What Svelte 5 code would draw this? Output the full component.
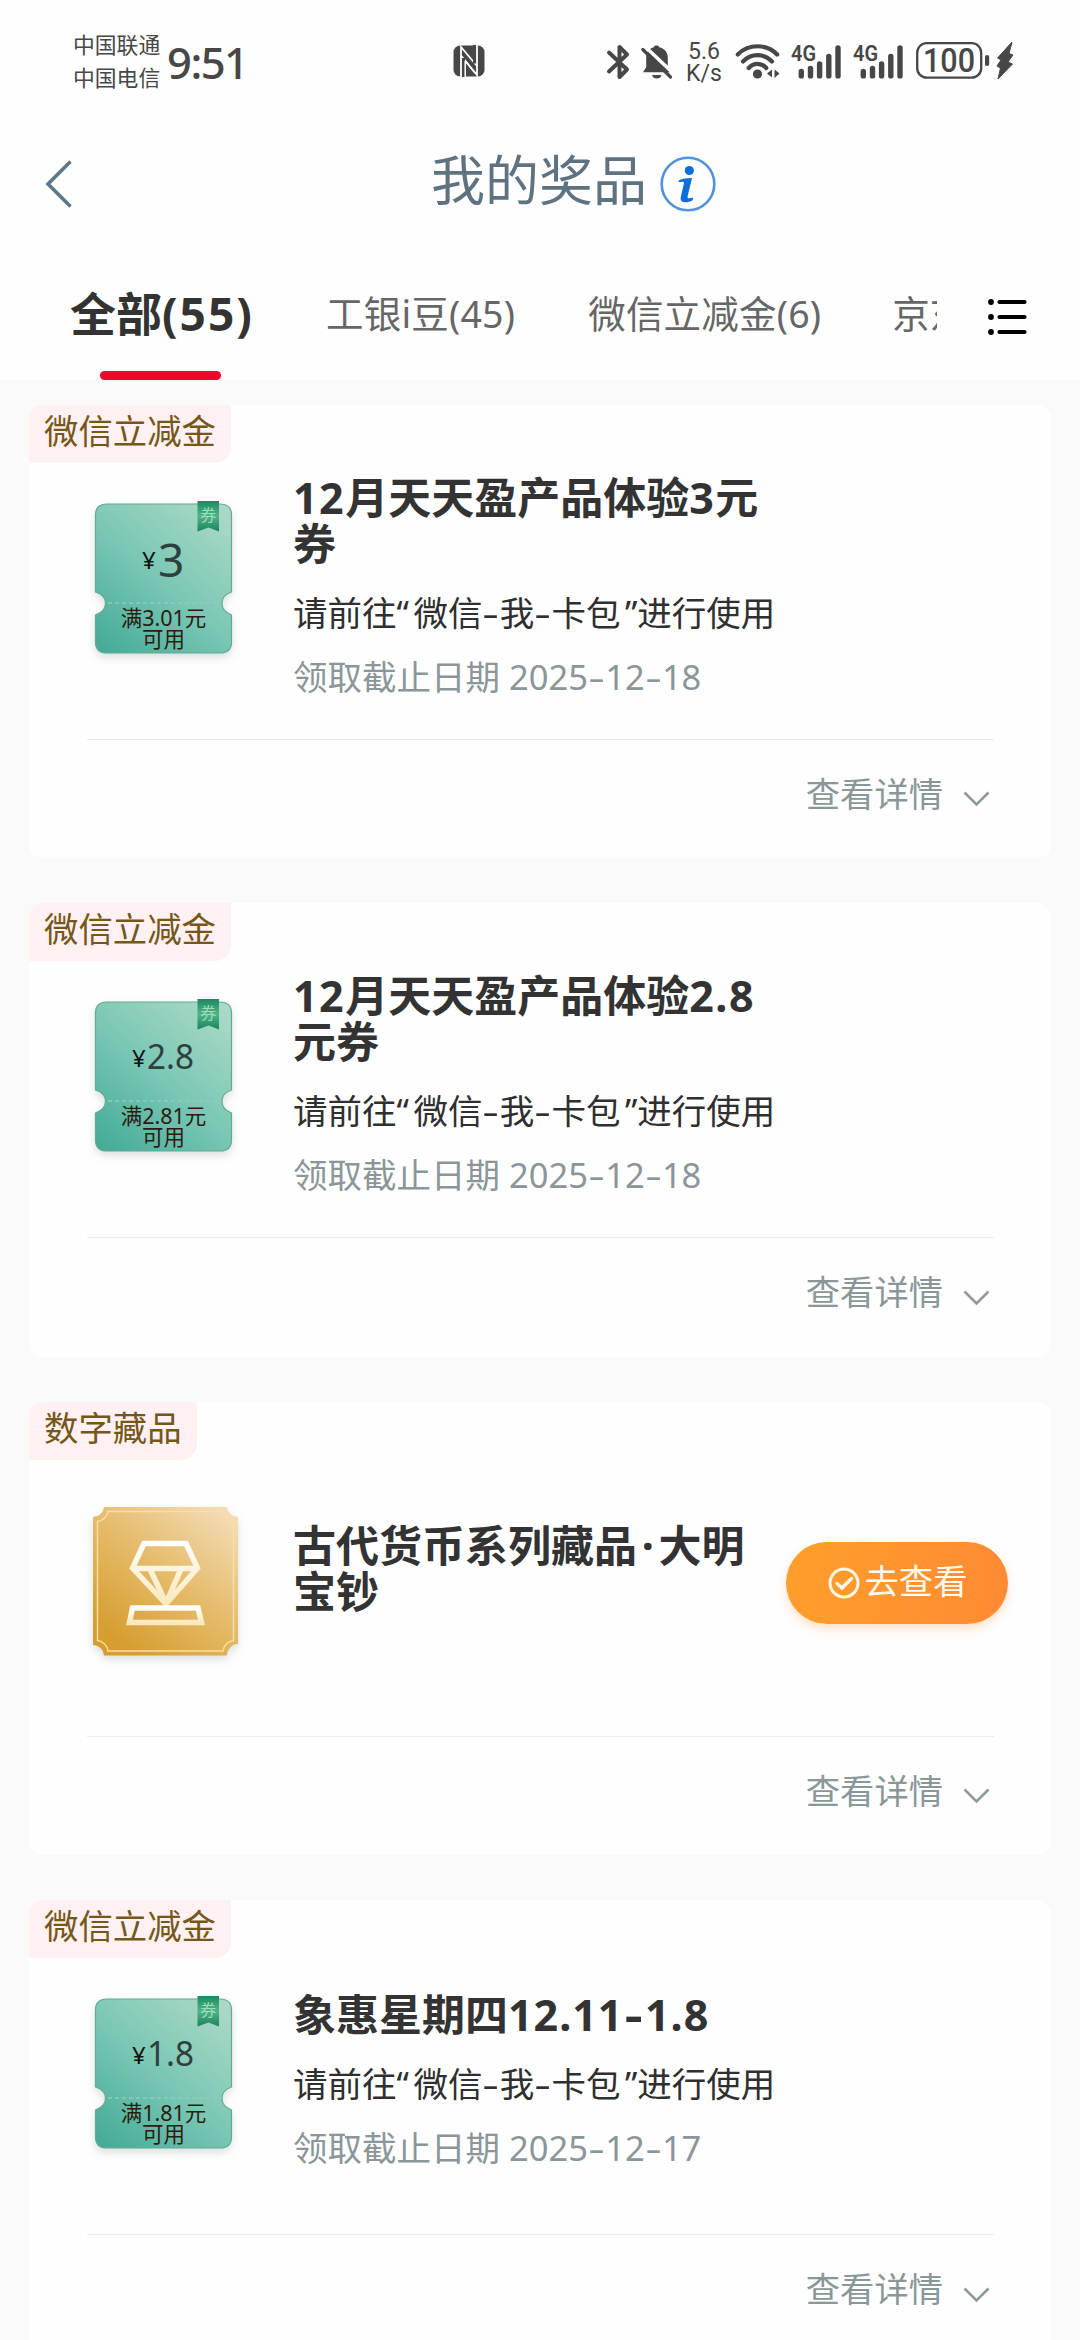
<script>
  const tabs = ['工银i豆(45)', '微信立减金(6)', '京东卡券(2)'];
  const hint = '请前往“微信-我-卡包”进行使用';
  const prizes = [
    { tag: '微信立减金', kind: 'two', title: '12月天天盈产品体验3元券', amount: '3', min: '3.01', date: '2025-12-18' },
    { tag: '微信立减金', kind: 'two', title: '12月天天盈产品体验2.8元券', amount: '2.8', min: '2.81', date: '2025-12-18' },
    { tag: '数字藏品', kind: 'coin', title: '古代货币系列藏品·大明宝钞' },
    { tag: '微信立减金', kind: 'one', title: '象惠星期四12.11-1.8', amount: '1.8', min: '1.81', date: '2025-12-17' }
  ];
  const runs = (text) => text.split(/([-“”·]|[0-9.]+)/).filter(Boolean);
  const runClass = (r) =>
    r === '-' ? 'dash' : r === '“' ? 'open' : r === '”' ? 'close' : r === '·' ? 'dot' : /^[0-9.]/.test(r) ? 'num' : '';
</script>

{#snippet rich(text)}{#each runs(text) as r}{#if runClass(r)}<span class={runClass(r)}>{r}</span>{:else}{r}{/if}{/each}{/snippet}

{#snippet signal()}
  <svg class="signal" width="52" height="40" viewBox="0 0 52 40">
    <text x="0" y="20.500" font-size="22" font-weight="600" textLength="25" lengthAdjust="spacingAndGlyphs" fill="#474747">4G</text>
    <g stroke="#474747" stroke-width="5.400" stroke-linecap="round">
      <path d="M10.3 31.500v4.400M19.500 28.500v7.400M28.600 24v11.900M37.800 16.500v19.400M47 8v27.900" />
    </g>
  </svg>
{/snippet}

<div class="page">
  <header>
    <div class="status">
      <div class="carriers"><span>中国联通</span><span>中国电信</span></div>
      <div class="time">9:51</div>
      <svg class="nfc" width="32" height="32" viewBox="0 0 32 32">
        <rect x="0.500" y="0.500" width="31" height="31" rx="6.500" fill="#474747" />
        <path d="M8 32V2L24 21" fill="none" stroke="#fff" stroke-width="1.800" />
        <path d="M24 0V30L8 10.500" fill="none" stroke="#fff" stroke-width="1.800" />
        <path d="M10.500 13V32M21.500 0V18.500" stroke="#474747" stroke-width="3" />
        <path d="M12.200 32V16M12.200 16L22 28" fill="none" stroke="#fff" stroke-width="1.500" />
      </svg>
      <div class="right">
        <svg class="bt" width="24" height="36" viewBox="0 0 24 36">
          <path d="M2 8.500L20 25.500L12.500 33V3L20 10.500L2 27.500" fill="none" stroke="#474747" stroke-width="4" stroke-linejoin="round" stroke-linecap="round" />
        </svg>
        <svg class="bell" width="32" height="36" viewBox="0 0 32 36">
          <path d="M15.500 1.500c1.600 0 2.500.7 2.700 1.700 5.600 1.200 8.600 5.200 8.600 10.600v9.800l3 4.600H2l3.200-4.900v-9.500c0-5.400 2.800-9.400 7.600-10.600.2-1 1.100-1.700 2.700-1.700z" fill="#474747" />
          <path d="M11 31h9.500c-.6 2.400-2.300 3.600-4.700 3.600S11.600 33.400 11 31z" fill="#474747" />
          <path d="M3 1.500L33 30" stroke="#fff" stroke-width="3.500" />
          <path d="M1.800 5.500L29.500 33" stroke="#474747" stroke-width="3.200" stroke-linecap="round" />
        </svg>
        <div class="rate"><span>5.6</span><span>K/s</span></div>
        <svg class="wifi" width="46" height="38" viewBox="0 0 46 38">
          <g fill="none" stroke="#474747" stroke-width="4.200" stroke-linecap="round">
            <path d="M2.800 12.500C13 1.500 32 1.500 42.200 12.500M8 19.500C16 11 29 11 37 19.500M13.700 26C18.500 20.500 26.500 20.500 31.300 26" />
          </g>
          <circle cx="22.500" cy="32" r="4.600" fill="#474747" />
          <path d="M37 27.500v8l-5-4zM39.500 27.500v8.500l5-4.500z" fill="#474747" />
        </svg>
        {@render signal()}
        {@render signal()}
        <svg class="battery" width="98" height="40" viewBox="0 0 98 40">
          <rect x="1.200" y="3.200" width="64" height="34.500" rx="9.500" fill="none" stroke="#474747" stroke-width="2.300" />
          <text x="33" y="32" text-anchor="middle" font-size="32.500" font-weight="500" textLength="52" lengthAdjust="spacingAndGlyphs" fill="#474747">100</text>
          <rect x="69" y="15" width="4.200" height="11" rx="2" fill="#474747" />
          <path d="M96 2L81.500 18L85 20L81 26L84.500 28L82 39L96.500 24L92 22L97 15L93 13.500Z" fill="#474747" stroke="#474747" stroke-width="1" stroke-linejoin="round" />
        </svg>
      </div>
    </div>

    <div class="titlebar">
      <svg class="back" width="30" height="50" viewBox="0 0 30 50">
        <path d="M25.500 2.500L3 25L25.500 47.500" fill="none" stroke="#5c7889" stroke-width="3.600" />
      </svg>
      <h1>我的奖品</h1>
      <svg class="info" width="56" height="56" viewBox="0 0 56 56">
        <circle cx="28" cy="28" r="26.300" fill="none" stroke="#4f93da" stroke-width="2.600" />
        <circle cx="29.300" cy="14.500" r="4.600" fill="#0b6fdb" />
        <path d="M18.800 24.500C22 22.300 27.500 22.200 32 22L27.600 40.500C27.200 42.700 29.500 42.700 33.200 41.600L32.600 44.200C29.500 46.500 19.500 48.300 20.700 41.500L24 27C24.200 25.300 21.500 25.600 18.500 26.200Z" fill="#0b6fdb" />
      </svg>
    </div>

    <nav>
      <div class="tabs">
        <div class="tab active">全部<span>(55)</span></div>
        {#each tabs as t}<div class="tab">{t}</div>{/each}
      </div>
      <svg class="list" width="40" height="38" viewBox="0 0 40 38">
        <g fill="#000"><circle cx="3" cy="4" r="2.900" /><circle cx="3" cy="19" r="2.900" /><circle cx="3" cy="34" r="2.900" /></g>
        <path d="M11.500 4H36.500M11.500 19H36.500M11.500 34H36.500" stroke="#000" stroke-width="4.200" stroke-linecap="round" />
      </svg>
    </nav>
  </header>

  <main>
    {#each prizes as p}
      <section class="card">
        <div class="tag">{p.tag}</div>
        <div class="body {p.kind}">
          {#if p.kind === 'coin'}
            <svg class="art" width="170" height="170" viewBox="0 0 170 170">
              <defs>
                <linearGradient id="gold" x1="0.150" y1="0.900" x2="0.850" y2="0">
                  <stop offset="0" stop-color="#d69d2f" /><stop offset="0.500" stop-color="#e5bb6a" /><stop offset="1" stop-color="#f3dbb5" />
                </linearGradient>
                <linearGradient id="shine" x1="0" y1="0" x2="0" y2="1">
                  <stop offset="0" stop-color="#fffefa" /><stop offset="1" stop-color="#fbe7bd" />
                </linearGradient>
              </defs>
              <path class="drop" d="M19 12H142A11 11 0 0 0 153 22V149A11 11 0 0 0 142 160.500H19A11 11 0 0 0 8 150V22A11 11 0 0 0 19 12Z" fill="url(#gold)" />
              <path d="M23 16.500H138A12 12 0 0 0 148.500 26.500V145.500A12 12 0 0 0 138 156H23A12 12 0 0 0 12.500 145.500V26.500A12 12 0 0 0 23 16.500Z" fill="none" stroke="#fbdda0" stroke-width="1.500" />
              <g fill="none" stroke="url(#shine)" stroke-width="5.500" stroke-linejoin="miter">
                <path d="M59 48.500H101L112.500 73L81 109L47.500 73ZM47.500 73.500H112.500M65 74L81 108L96 74" />
                <path d="M47.500 113H113L116.500 127.500H44.500Z" />
              </g>
            </svg>
          {:else}
            <svg class="art" width="170" height="170" viewBox="0 0 170 170">
              <defs>
                <linearGradient id="green" x1="0.050" y1="1" x2="0.850" y2="0">
                  <stop offset="0" stop-color="#43ab97" /><stop offset="0.500" stop-color="#79c7b4" /><stop offset="1" stop-color="#a9d8c6" />
                </linearGradient>
                <linearGradient id="ribbon" x1="0" y1="0" x2="0" y2="1">
                  <stop offset="0" stop-color="#1c8a5e" /><stop offset="0.500" stop-color="#51b48a" /><stop offset="1" stop-color="#19845a" />
                </linearGradient>
              </defs>
              <path class="drop" d="M22 9H135Q146.500 9 146.500 20V97C140 99 137 103.500 137 108.500S140 117.500 146.500 120V147Q146.500 158 135 158H22Q10.500 158 10.500 147V120C17 117.500 20.500 113.500 20.500 108.500S17 99 10.500 97V20Q10.500 9 22 9Z" fill="url(#green)" stroke="#64a994" stroke-width="1.200" />
              <path d="M23 108H136" stroke="#8fcdbb" stroke-width="1.400" stroke-dasharray="4 3" />
              <path d="M112.500 6H134V36.500L123.500 32.500L112.500 36.500Z" fill="url(#ribbon)" />
              <text x="123.300" y="25.500" text-anchor="middle" font-size="16" fill="#9dddbd">券</text>
              {#if p.amount.length === 1}
                <text x="57" y="74" font-size="24" fill="#111">¥</text>
                <text x="73" y="82" font-size="46" fill="#2e3f3d">{p.amount}</text>
              {:else}
                <text x="47" y="74" font-size="24" fill="#111">¥</text>
                <text x="62" y="76" font-size="34.500" textLength="47" lengthAdjust="spacingAndGlyphs" fill="#2e3f3d">{p.amount}</text>
              {/if}
              <text x="78.500" y="130.500" text-anchor="middle" font-size="21.500" fill="#2c1b0e">满{p.min}元</text>
              <text x="78.500" y="151.500" text-anchor="middle" font-size="21.500" fill="#2c1b0e">可用</text>
            </svg>
          {/if}
          <div class="copy">
            <h2>{@render rich(p.title)}</h2>
            {#if p.date}
              <p class="hint">{@render rich(hint)}</p>
              <p class="date">领取截止日期 {@render rich(p.date)}</p>
            {/if}
          </div>
          {#if p.kind === 'coin'}
            <button>
              <svg width="34" height="34" viewBox="0 0 34 34" fill="none" stroke="#fff7e6">
                <circle cx="17" cy="17" r="14" stroke-width="3" />
                <path d="M10 17.500L15 22L24.500 12.500" stroke-width="3.500" stroke-linecap="round" />
              </svg><span>去查看</span></button>
          {/if}
        </div>
        <div class="more">
          <span>查看详情</span>
          <svg width="27" height="17" viewBox="0 0 27 17"><path d="M1.500 1.500L13.500 13.500L25.500 1.500" fill="none" stroke="#8e9a9b" stroke-width="2.600" /></svg>
        </div>
      </section>
    {/each}
  </main>
</div>

<style>
  :global(body) { margin: 0; background: #fafafa; }
  .page {
    width: 1080px; height: 2340px; overflow: hidden; background: #fafafa;
    font-family: "Noto Sans", "Noto Sans CJK SC", sans-serif; color: #333;
  }
  h1, h2, p { margin: 0; font-weight: 400; }
  svg { display: block; flex: none; overflow: visible; }
  header { background: #fefefe; height: 380px; }

  .status { display: flex; height: 124px; color: #474747; }
  .carriers { display: flex; flex-direction: column; padding: 27.500px 0 0 73px; width: 94px; font-size: 21.800px; line-height: 33px; white-space: nowrap; }
  .time { padding-top: 31px; width: 286px; font-size: 43.500px; line-height: 62px; font-weight: 500; letter-spacing: -1.500px; }
  .nfc { margin-top: 45px; }
  .right { display: flex; align-items: flex-start; margin-left: 122px; }
  .bt { margin-top: 44px; }
  .bell { margin: 44px 0 0 10px; }
  .rate { display: flex; flex-direction: column; align-items: center; width: 40px; margin: 41px 0 0 11px; font-family: Roboto, "Noto Sans", sans-serif; font-size: 23px; line-height: 21.500px; }
  .wifi { margin: 42px 0 0 11px; }
  .signal { margin: 39.500px 0 0 10px; font-family: Roboto, "Noto Sans", sans-serif; }
  .battery { margin: 40px 0 0 11px; font-family: Roboto, "Noto Sans", sans-serif; }

  .titlebar { display: flex; height: 126px; }
  .back { margin: 35px 0 0 45px; }
  h1 { margin-left: 356px; width: 229px; font-size: 54px; line-height: 112px; color: #5f7280; }
  .info { margin-top: 32px; }

  nav { display: flex; height: 130px; }
  .tabs { display: flex; width: 937px; overflow: hidden; white-space: nowrap; }
  .tab { flex: none; margin-left: 73px; font-size: 37.500px; line-height: 128px; letter-spacing: 0.200px; color: #666; }
  .tab:last-child { margin-left: 71px; letter-spacing: -0.500px; }
  .tab.active { position: relative; margin-left: 70px; width: 183px; font-size: 46px; font-weight: 700; line-height: 127px; letter-spacing: 0; color: #333; }
  .tab.active span { letter-spacing: 2px; }
  .tab.active::after { content: ""; position: absolute; left: 30px; bottom: 0; width: 121px; height: 9px; border-radius: 5px; background: #ec0828; }
  .list { margin: 47.500px 0 0 51px; }

  main { display: flex; flex-direction: column; gap: 45px; padding: 24.500px 29px 0; }
  .card { flex: none; height: 453.500px; border-radius: 14px; background: #fefefe; overflow: hidden; }
  .tag { width: fit-content; height: 58px; padding: 0 15px; box-sizing: border-box; border-radius: 12px 0 16px 0; background: #fff0f1; color: #755719; font-size: 34.400px; line-height: 51px; }
  .body { display: flex; height: 277px; margin: 0 57px 0 58px; border-bottom: 1.500px solid #eaebeb; box-sizing: border-box; }
  .art { margin: 32px 0 0 -2px; }
  .coin .art { margin-top: 35px; }
  .drop { filter: drop-shadow(0 4px 4px rgba(60, 90, 85, 0.180)); }
  .copy { flex: none; width: 485px; margin-left: 38px; white-space: nowrap; }
  .two .copy { padding-top: 12px; }
  .one .copy { padding-top: 34px; }
  .coin .copy { padding-top: 63px; }
  h2 { width: 480px; font-size: 43px; line-height: 46px; font-weight: 700; color: #333; white-space: normal; word-break: break-all; }
  h2 .num { letter-spacing: 1.500px; }
  .one h2 .num { letter-spacing: 1px; }
  .hint { margin-top: 20px; font-size: 34.500px; line-height: 52px; color: #2f2f2f; }
  .date { margin-top: 12px; font-size: 34.500px; line-height: 52px; color: #8a9699; }
  .dash { display: inline-block; width: 0.500em; text-align: center; transform: scaleX(1.500); }
  h2 .dash { transform: scaleX(1.300); }
  .open, .close, .dot { display: inline-block; width: 0.490em; }
  .dot { width: 0.500em; text-align: center; }
  .close { text-align: right; }
  button {
    display: flex; align-items: center; justify-content: center; gap: 4px; flex: none;
    width: 222px; height: 82px; margin: 82px 0 0 8px; padding: 0; border: 0; border-radius: 41px;
    background: linear-gradient(100deg, #ff9f2a, #ff8a34); box-shadow: 0 5px 10px rgba(255, 140, 50, 0.250);
    font: inherit; font-size: 34.300px; color: #fffaf0; white-space: nowrap;
  }
  button span { height: 52px; line-height: 47px; }
  .more { display: flex; justify-content: flex-end; margin-right: 61px; padding-top: 28px; font-size: 34.300px; line-height: 52px; color: #8a9799; }
  .more svg { margin: 23.500px 0 0 20px; }
</style>
